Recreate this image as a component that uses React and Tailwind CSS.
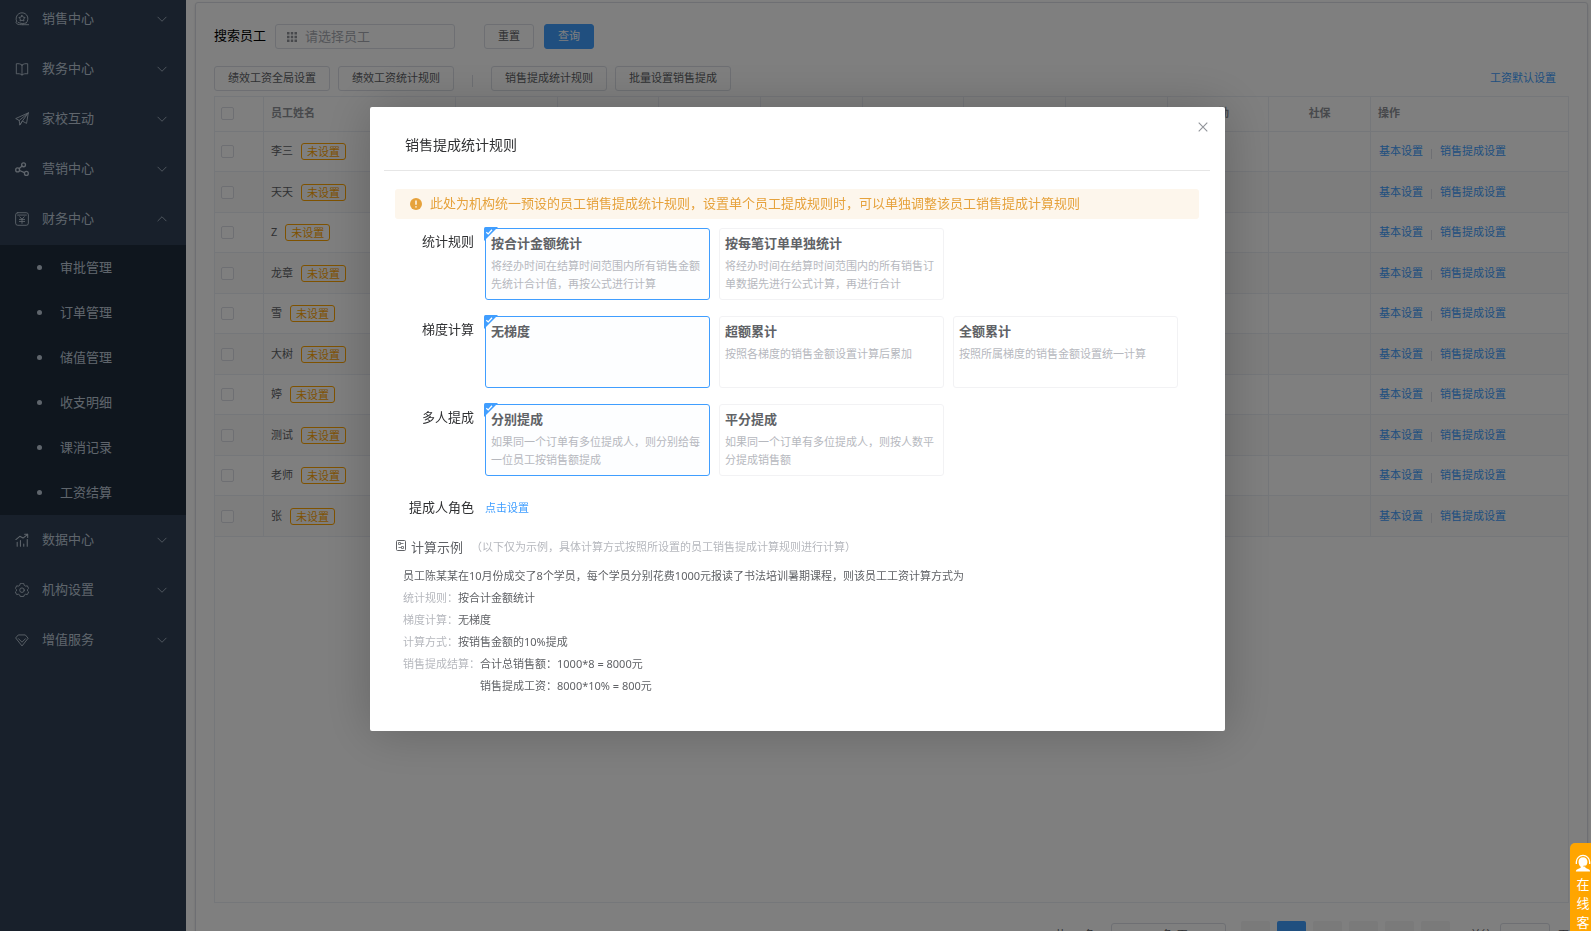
import React from "react";

const iconProps = {
  viewBox: "0 0 16 16",
  fill: "none",
  stroke: "currentColor",
  strokeWidth: 1,
  strokeLinecap: "round",
  strokeLinejoin: "round",
  "aria-hidden": true,
};

const MenuIcon = ({ name }) => (
  <svg {...iconProps} className="h-[14px] w-[14px] shrink-0">
    {name === "sales" && (
      <>
        <path d="M9 14.500h6.500M12.800 12.500A6.800 6.800 0 1 0 1.800 10.500" />
        <path d="M8 3.800l1.200 2 2.300.5-1.600 1.700.3 2.300L8 9.400l-2.200.9.3-2.300-1.600-1.700 2.300-.5z" />
        <path d="M1.800 10.500c-1 .6-.8 2 .2 2.800 1.500 1.200 4 1.200 7 1.200M3.500 11.800c3 1.800 6.500 1.700 9.300.7" />
      </>
    )}
    {name === "teach" && (
      <path d="M8 3.500C6.500 2 4 1.700 1.500 2v11.500c2.500-.3 5-.1 6.500 1.400 1.500-1.500 4-1.700 6.500-1.400V2c-2.500-.3-5 0-6.500 1.500zM8 3.500v11.400" />
    )}
    {name === "home" && (
      <path d="M15.200 1L.8 7.500l4 2.200L15.200 1l-2 12-4.800-2.600L5.500 14.800l-.7-5.100M15.200 1L8.400 10.400l-2.900 4.400" />
    )}
    {name === "market" && (
      <g strokeWidth="1.500">
        <circle cx="3" cy="9" r="2.200" />
        <circle cx="9.800" cy="3.200" r="2.200" />
        <circle cx="13" cy="13" r="2.200" />
        <path d="M4.800 7.500l3.400-2.800M5.200 9.700l5.600 2.500" />
      </g>
    )}
    {name === "finance" && (
      <>
        <rect x=".7" y=".8" width="14.600" height="14.400" rx="2.500" />
        <path d="M3 3.500h10M5.500 5.500L8 8.300l2.500-2.800M8 8.300v4.700M5 8.500h6M5 10.800h6" />
      </>
    )}
    {name === "data" && (
      <g strokeWidth="1.200">
        <path d="M2.500 15v-4.500M6.200 15V8.500M10 15v-2.500M14 15V7.500" />
        <path d="M1 7.500l4.500-3.700 3.700 2L14.500 1.500M11 1.500h3.500V5" />
      </g>
    )}
    {name === "setting" && (
      <>
        <path d="M6 .8l-.6 1.900-1.600.9-1.900-.4L.4 6.300 1.700 7.600v1.400L.4 10.300l1.500 2.900 1.900-.4 1.600.9.6 1.700h4l.6-1.700 1.600-.9 1.900.4 1.500-2.900L14.300 9V7.600l1.300-1.300-1.500-3.100-1.900.4-1.600-.9L10 .8z" />
        <circle cx="8" cy="8.200" r="2.600" />
      </>
    )}
    {name === "service" && (
      <path d="M4.200 2.200h7.600L15 6l-7 8.800L1 6zM4 6.500l4 4 4-4" />
    )}
  </svg>
);

const Chevron = ({ up }) => (
  <svg {...iconProps} className="h-3 w-3">
    <path d={up ? "M2.500 10.500L8 5l5.500 5.500" : "M2.500 5.500L8 11l5.500-5.500"} />
  </svg>
);

const topMenu = [
  ["sales", "销售中心"],
  ["teach", "教务中心"],
  ["home", "家校互动"],
  ["market", "营销中心"],
  ["finance", "财务中心"],
];
const subMenu = ["审批管理", "订单管理", "储值管理", "收支明细", "课消记录", "工资结算"];
const bottomMenu = [
  ["data", "数据中心"],
  ["setting", "机构设置"],
  ["service", "增值服务"],
];

const MenuItem = ({ icon, label, open = false }) => (
  <li>
    <button type="button" aria-expanded={open} className="flex h-[50px] w-full items-center pr-[18px] pl-[15px] text-left text-[13px]">
      <MenuIcon name={icon} />
      <span className="ml-[13px] flex-1">{label}</span>
      <Chevron up={open} />
    </button>
  </li>
);

const Sidebar = () => (
  <nav className="h-full w-[186px] shrink-0 overflow-hidden bg-[#304156] text-[#bfcbd9]">
    <ul className="-mt-[6px] pb-px">
      {topMenu.map(([icon, label]) => (
        <MenuItem key={label} icon={icon} label={label} open={icon === "finance"} />
      ))}
    </ul>
    <ul className="bg-[#1f2d3d]">
      {subMenu.map((label) => (
        <li key={label}>
          <a href="#" className="flex h-[45px] items-center gap-[18px] pl-[37px] text-[13px]">
            <span className="h-[5px] w-[5px] rounded-full bg-[#bfcbd9]" />
            {label}
          </a>
        </li>
      ))}
    </ul>
    <ul>
      {bottomMenu.map(([icon, label]) => (
        <MenuItem key={label} icon={icon} label={label} />
      ))}
    </ul>
  </nav>
);

const Button = ({ primary, children }) => (
  <button
    type="button"
    className={
      primary
        ? "h-[25px] rounded-[3px] border border-[#409eff] bg-[#409eff] px-[13px] text-[11px] text-white"
        : "h-[25px] rounded-[3px] border border-[#dcdfe6] bg-white px-[13px] text-[11px] text-[#606266]"
    }
  >
    {children}
  </button>
);

const Tick = ({ label }) => (
  <input
    type="checkbox"
    aria-label={label}
    className="block h-[13px] w-[13px] appearance-none rounded-[2px] border border-[#dcdfe6] bg-white"
  />
);

const staff = ["李三", "天天", "Z", "龙章", "雪", "大树", "婷", "测试", "老师", "张"];
const headers = ["", "", "", "", "", "", "", "考勤", "社保"];
const cell = "border-r border-b border-[#ebeef5]";

const StaffTable = () => (
  <div className="flex-1 border border-[#ebeef5]">
    <table className="w-full table-fixed border-separate border-spacing-0 text-left text-[11px] text-[#606266]">
      <colgroup>
        <col className="w-[49px]" />
        <col className="w-[192px]" />
        {headers.map((_, i) => (
          <col key={i} />
        ))}
        <col className="w-[197px]" />
      </colgroup>
      <thead className="text-[#909399]">
        <tr className="h-[35px]">
          <th className={cell + " pb-[2px] pl-[6px]"}><Tick label="全选" /></th>
          <th className={cell + " pb-[2px] pl-[7px]"}>员工姓名</th>
          {headers.map((h, i) => (
            <th key={i} className={cell + " pb-[2px] text-center"}>{h}</th>
          ))}
          <th className="border-b border-[#ebeef5] pb-[2px] pl-[7px]">操作</th>
        </tr>
      </thead>
      <tbody>
        {staff.map((name) => (
          <tr key={name} className="h-[40px] even:h-[41px] even:bg-[#fafafa]">
            <td className={cell + " pl-[6px]"}><Tick label={name} /></td>
            <td className={cell + " pl-[7px]"}>
              <div className="flex items-center gap-2">
                {name}
                <span className="h-[17px] rounded-[3px] border border-[#ffa500] px-[5px] leading-[15px] text-[#ffa500]">未设置</span>
              </div>
            </td>
            {headers.map((_, i) => (
              <td key={i} className={cell} />
            ))}
            <td className="border-b border-[#ebeef5] pl-2">
              <div className="flex items-center text-[#409eff]">
                <a href="#">基本设置</a>
                <span className="mx-2 mt-1 h-[10px] w-px bg-[#dcdfe6]" />
                <a href="#">销售提成设置</a>
              </div>
            </td>
          </tr>
        ))}
      </tbody>
    </table>
  </div>
);

const pager = "h-[29px] w-[29px] rounded-[2px] bg-[#f4f4f5]";

const Pagination = () => (
  <div className="mt-[18px] flex h-[29px] shrink-0 items-center justify-end text-[11px] text-[#606266]">
    <span className="mr-4">共 10 条</span>
    <select aria-label="每页条数" className="mr-[15px] h-[25px] w-[115px] appearance-none rounded-[3px] border border-[#dcdfe6] bg-white text-center">
      <option>20条/页</option>
    </select>
    <div className="flex gap-[7px]">
      <button type="button" aria-label="上一页" className={pager} />
      <button type="button" className="h-[29px] w-[29px] rounded-[2px] bg-[#409eff] font-bold text-white">1</button>
      <button type="button" className={pager}>2</button>
      <button type="button" className={pager}>3</button>
      <button type="button" className={pager}>4</button>
      <button type="button" aria-label="下一页" className={pager} />
    </div>
    <label className="ml-5 flex items-center gap-2">
      前往
      <input defaultValue="1" className="h-[25px] w-[50px] rounded-[3px] border border-[#dcdfe6] text-center" />
      页
    </label>
  </div>
);

const Main = () => (
  <main className="flex h-full min-w-0 flex-1 pt-[2px] pr-[3px] pl-[9px]">
    <div className="flex h-[950px] flex-1 flex-col rounded-[3px] border border-[#dcdfe6] bg-white pt-[21px] pr-[18px] pb-px pl-[18px] shadow">
      <div className="flex items-center">
        <label htmlFor="staff" className="pb-[2px] text-[13px] text-black">搜索员工</label>
        <div className="ml-[9px] flex h-[25px] w-[180px] items-center rounded-[3px] border border-[#dcdfe6] pl-[11px]">
          <svg viewBox="0 0 10 10" className="h-[10px] w-[10px] text-[#909399]" fill="currentColor" aria-hidden="true">
            <path d="M0 0h2.500v2.500H0zM3.800 0h2.400v2.500H3.800zM7.500 0H10v2.500H7.500zM0 3.800h2.500v2.400H0zM3.800 3.800h2.400v2.400H3.800zM7.500 3.800H10v2.400H7.500zM0 7.500h2.500V10H0zM3.800 7.500h2.400V10H3.800zM7.500 7.500H10V10H7.500z" />
          </svg>
          <input id="staff" placeholder="请选择员工" className="ml-2 min-w-0 flex-1 text-[13px] outline-none placeholder:text-[#a8abb2]" />
        </div>
        <div className="ml-[29px] flex gap-[10px]">
          <Button>重置</Button>
          <Button primary>查询</Button>
        </div>
      </div>
      <div className="mt-[17px] mb-[5px] flex items-center">
        <div className="flex gap-2">
          <Button>绩效工资全局设置</Button>
          <Button>绩效工资统计规则</Button>
        </div>
        <span className="mx-[18px] mt-1 h-3 w-px bg-[#dcdfe6]" />
        <div className="flex gap-2">
          <Button>销售提成统计规则</Button>
          <Button>批量设置销售提成</Button>
        </div>
        <a href="#" className="mr-[13px] ml-auto text-[11px] text-[#409eff]">工资默认设置</a>
      </div>
      <StaffTable />
      <Pagination />
    </div>
  </main>
);

const groups = [
  {
    label: "统计规则",
    options: [
      ["按合计金额统计", "将经办时间在结算时间范围内所有销售金额先统计合计值，再按公式进行计算"],
      ["按每笔订单单独统计", "将经办时间在结算时间范围内的所有销售订单数据先进行公式计算，再进行合计"],
    ],
  },
  {
    label: "梯度计算",
    options: [
      ["无梯度", ""],
      ["超额累计", "按照各梯度的销售金额设置计算后累加"],
      ["全额累计", "按照所属梯度的销售金额设置统一计算"],
    ],
  },
  {
    label: "多人提成",
    options: [
      ["分别提成", "如果同一个订单有多位提成人，则分别给每一位员工按销售额提成"],
      ["平分提成", "如果同一个订单有多位提成人，则按人数平分提成销售额"],
    ],
  },
];

const OptionCard = ({ title, desc, selected }) => (
  <button
    type="button"
    aria-pressed={selected}
    className={
      selected
        ? "relative h-[72px] w-[225px] rounded-[3px] border border-[#409eff] bg-[#fdfeff] pt-[5px] pl-[5px] text-left"
        : "relative h-[72px] w-[225px] rounded-[3px] border border-[#f2f2f4] bg-white pt-[5px] pl-[5px] text-left"
    }
  >
    {selected && (
      <svg viewBox="0 0 14 14" className="absolute -top-[2px] -left-[2px] h-[14px] w-[14px]" aria-hidden="true">
        <path d="M0 1.500Q0 0 1.500 0H14L0 14z" fill="#409eff" />
        <path d="M2.300 5.200l1.900 1.700L8 2.800" fill="none" stroke="#fff" strokeWidth="1.300" />
      </svg>
    )}
    <span className="flex h-full flex-col">
      <span className="text-[13px] leading-[19px] font-bold text-[#606266]">{title}</span>
      <span className="mt-1 text-[11px] leading-[18px] text-[#b6b8be]">{desc}</span>
    </span>
  </button>
);

const Row = ({ label, children }) => (
  <div className="flex">
    <span className="text-[#b6b8be]">{label}：</span>
    <span>{children}</span>
  </div>
);

const Dialog = () => (
  <div
    role="dialog"
    aria-modal="true"
    aria-labelledby="dialog-title"
    className="w-[855px] rounded-[2px] bg-white px-[14px] pb-[34px] shadow-[1px_1px_50px_rgba(0,0,0,0.22)]"
  >
    <header className="mr-px flex h-[64px] border-b border-[#e6e6e6] pl-[21px]">
      <h2 id="dialog-title" className="mt-[28px] text-[14px] leading-5 text-[#303133]">销售提成统计规则</h2>
      <button type="button" aria-label="关闭" className="mt-[15px] mr-[2px] ml-auto h-[10px] w-[10px] text-[#909399]">
        <svg viewBox="0 0 10 10" className="h-[10px] w-[10px]" fill="none" stroke="currentColor" strokeWidth="1.100" aria-hidden="true">
          <path d="M.7.7l8.600 8.600M9.300.7L.7 9.300" />
        </svg>
      </button>
    </header>
    <div className="px-[11px] pt-[18px]">
      <p className="mr-px flex h-[30px] items-center gap-2 rounded-[3px] bg-[#fdf6ec] pl-[15px] text-[13px] text-[#e6a23c]">
        <svg viewBox="0 0 12 12" className="h-3 w-3 shrink-0" aria-hidden="true">
          <circle cx="6" cy="6" r="6" fill="#e6a23c" />
          <path d="M6 2.500v4.300M6 8.200v1.300" stroke="#fff" strokeWidth="1.400" />
        </svg>
        此处为机构统一预设的员工销售提成统计规则，设置单个员工提成规则时，可以单独调整该员工销售提成计算规则
      </p>
      <div className="mt-[9px] flex flex-col gap-4">
        {groups.map((g) => (
          <section key={g.label} className="flex" aria-label={g.label}>
            <h3 className="mt-1 mr-[11px] w-[79px] text-right text-[13px] leading-[19px] text-[#303133]">{g.label}</h3>
            <div className="flex gap-[9px]">
              {g.options.map(([title, desc], i) => (
                <OptionCard key={title} title={title} desc={desc} selected={i === 0} />
              ))}
            </div>
          </section>
        ))}
        <div className="mt-[6px] flex items-center">
          <span className="mr-[11px] w-[79px] text-right text-[13px] leading-[19px] text-[#303133]">提成人角色</span>
          <a href="#" className="pt-px text-[11px] text-[#409eff]">点击设置</a>
        </div>
      </div>
      <div className="mt-5 flex items-center text-[#606266]">
        <svg viewBox="0 0 10 11" className="mr-[5px] mb-1 ml-px h-[11px] w-[10px]" fill="none" stroke="currentColor" strokeWidth="1" aria-hidden="true">
          <rect x=".5" y=".5" width="9" height="10" rx="1" />
          <path d="M2.500 2.500h2v2h-2zM4.500 3.500h3M2.500 7.500h3M5.500 6.500h2v2h-2z" strokeWidth=".8" />
        </svg>
        <h3 className="text-[13px] leading-5">计算示例</h3>
        <span className="ml-2 pt-px text-[11px] text-[#b6b8be]">（以下仅为示例，具体计算方式按照所设置的员工销售提成计算规则进行计算）</span>
      </div>
      <div className="mt-2 pl-[8px] text-[11px] leading-[22px] text-[#606266]">
        <p>员工陈某某在10月份成交了8个学员，每个学员分别花费1000元报读了书法培训暑期课程，则该员工工资计算方式为</p>
        <Row label="统计规则">按合计金额统计</Row>
        <Row label="梯度计算">无梯度</Row>
        <Row label="计算方式">按销售金额的10%提成</Row>
        <Row label="销售提成结算">
          合计总销售额：1000*8 = 8000元
          <br />
          销售提成工资：8000*10% = 800元
        </Row>
      </div>
    </div>
  </div>
);

const ServiceTab = () => (
  <button
    type="button"
    className="fixed right-0 bottom-0 flex h-[88px] w-[21px] flex-col items-center overflow-hidden rounded-tl-[5px] bg-[#ffa500] pt-[10px] pl-[5px] text-[13px] leading-[19px] text-white"
  >
    <svg viewBox="0 0 18 20" className="mb-[2px] h-[20px] w-[16px] shrink-0" aria-hidden="true">
      <path d="M1.500 11V9a7.500 7.500 0 0 1 15 0v2" fill="none" stroke="#fff" strokeWidth="1.500" />
      <path d="M9 3.500c3 0 5 2 5 5.200 0 1.500-.5 3-1.500 4.200l-3 .3v1l2-.2c-.2 1.500.5 1.800 2.500 2.400 1.800.6 3 1.300 3 3.100H1c0-1.800 1.200-2.500 3-3.100 2-.6 2.700-1 2.400-2.200C4.800 13 4 10.800 4 8.700 4 5.500 6 3.500 9 3.500z" fill="#fff" />
    </svg>
    <span className="w-[13px]">在线客服</span>
  </button>
);

export default function App() {
  return (
    <div className="flex h-screen overflow-hidden bg-white font-['Noto_Sans','Noto_Sans_CJK_SC',sans-serif]">
      <Sidebar />
      <Main />
      <div className="fixed inset-0 flex items-start justify-center bg-black/50 pt-[107px] pl-1">
        <Dialog />
      </div>
      <ServiceTab />
    </div>
  );
}
